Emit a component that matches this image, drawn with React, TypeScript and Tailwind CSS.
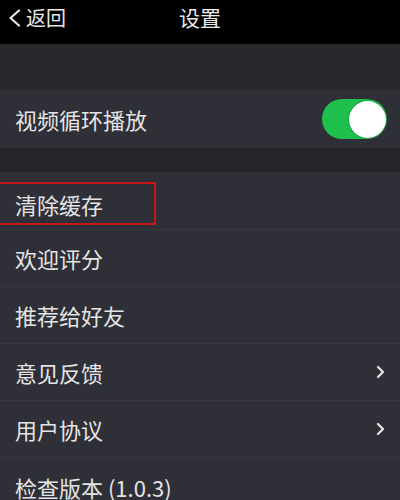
import React from 'react';

const font = { fontFamily: '"Noto Sans CJK SC", "Noto Sans", sans-serif' };

function Chevron() {
    return (
        <svg width="9" height="14" viewBox="0 0 9 14" className="text-[#e6e6e6]">
            <path d="M2 2l5 5-5 5" fill="none" stroke="currentColor" strokeWidth="2.2" strokeLinecap="round" strokeLinejoin="round" />
        </svg>
    );
}

function Row({ label, arrow, last }: { label: string; arrow?: boolean; last?: boolean }) {
    return (
        <div className={`h-[57px] flex items-center justify-between pl-[15px] pr-[15px] ${last ? '' : 'border-b border-[#383840]'}`}>
            <span className="text-[22px] text-[#e4e4e4] leading-none">{label}</span>
            {arrow && <Chevron />}
        </div>
    );
}

export default function App() {
    return (
        <div className="w-[400px] h-[500px] overflow-hidden bg-[#2f2f37]" style={font}>
            {/* top bar */}
            <div className="h-[44px] bg-black flex items-center justify-between px-[8px] pb-[9px]">
                <div className="flex items-center gap-[5px] w-[80px]">
                    <svg width="13" height="18" viewBox="0 0 13 18">
                        <path d="M11 1.5L2.5 9 11 16.5" fill="none" stroke="#e8e8e8" strokeWidth="2.2" strokeLinecap="round" strokeLinejoin="round" />
                    </svg>
                    <span className="text-[20px] text-[#e8e8e8] leading-none">返回</span>
                </div>
                <span className="text-[21px] text-[#ececec] leading-none">设置</span>
                <div className="w-[80px]" />
            </div>

            <div className="h-[46px] bg-[#28282d]" />

            <div className="h-[58px] flex items-center justify-between pl-[15px] pr-[13px]">
                <span className="text-[22px] text-[#e4e4e4] leading-none">视频循环播放</span>
                <div className="w-[65px] h-[40px] rounded-full bg-[#1fbf4e] flex items-center justify-end pr-[1px]">
                    <div className="w-[37px] h-[37px] rounded-full bg-white shadow-[0_0_2px_rgba(0,0,0,0.4)]" />
                </div>
            </div>

            <div className="h-[24px] bg-[#25252a]" />

            <div className="h-[58px] flex items-start pt-[10px] border-b border-[#383840]">
                <div className="h-[43px] w-[156px] border-2 border-l-0 border-[#c8161d] flex items-center pl-[15px]">
                    <span className="text-[22px] text-[#e4e4e4] leading-none">清除缓存</span>
                </div>
            </div>
            <Row label="欢迎评分" />
            <Row label="推荐给好友" />
            <Row label="意见反馈" arrow />
            <Row label="用户协议" arrow />
            <Row label="检查版本 (1.0.3)" last />
        </div>
    );
}
